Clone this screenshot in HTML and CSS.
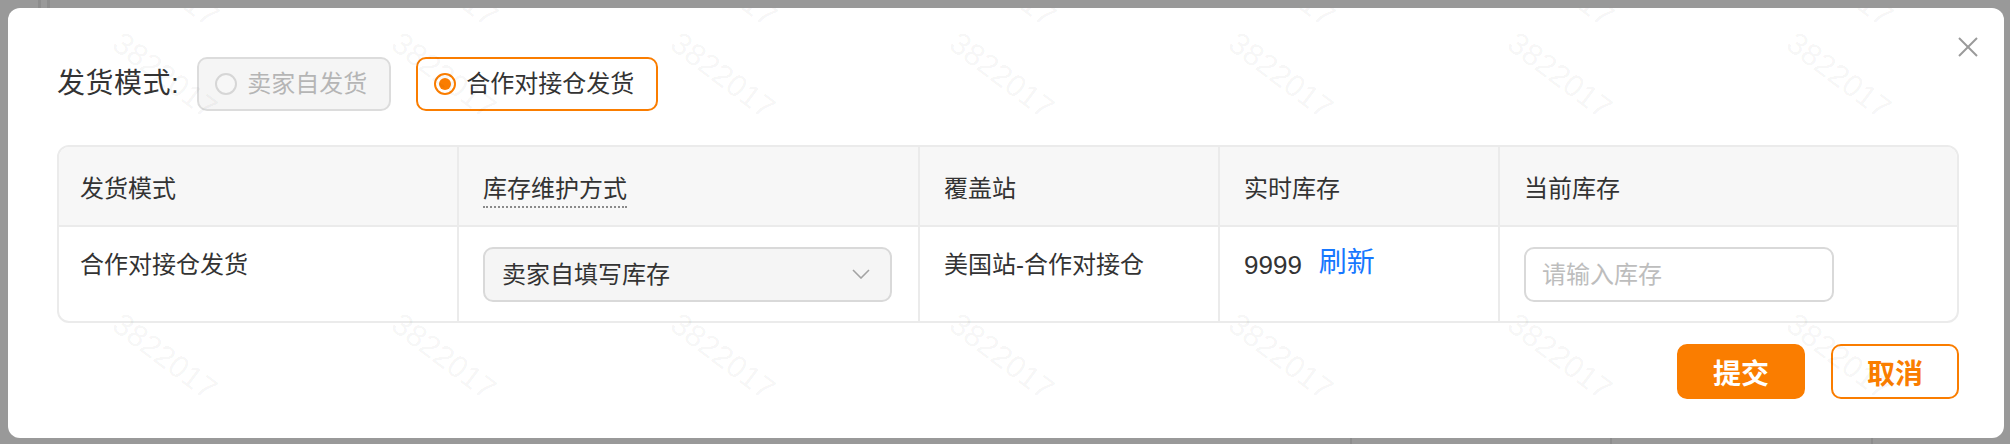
FILE: index.html
```html
<!DOCTYPE html>
<html lang="zh-CN">
<head>
<meta charset="utf-8">
<title>发货模式</title>
<link rel="stylesheet" href="styles.css">
</head>
<body>
<div class="modal">
  <div class="mode-row">
    <span class="mode-label">发货模式:</span>
    <div class="radio disabled"><span class="circle"></span><span>卖家自发货</span></div>
    <div class="radio checked"><span class="circle"></span><span>合作对接仓发货</span></div>
  </div>

  <div class="table">
    <div class="th first">发货模式</div>
    <div class="th"><span class="dotted">库存维护方式</span></div>
    <div class="th">覆盖站</div>
    <div class="th">实时库存</div>
    <div class="th">当前库存</div>

    <div class="td first">合作对接仓发货</div>
    <div class="td">
      <div class="select">
        <span>卖家自填写库存</span>
        <svg class="chev" width="18" height="10" viewBox="0 0 18 10"><polyline points="1,1 9,9 17,1" fill="none" stroke="#a3a3a3" stroke-width="1.6"/></svg>
      </div>
    </div>
    <div class="td">美国站-合作对接仓</div>
    <div class="td"><span class="num">9999</span><span class="link">刷新</span></div>
    <div class="td"><input class="input" type="text" placeholder="请输入库存"></div>
  </div>

  <div class="footer">
    <button class="btn primary">提交</button>
    <button class="btn ghost">取消</button>
  </div>

  <svg class="close" width="20" height="20" viewBox="0 0 20 20"><line x1="1" y1="1" x2="19" y2="19" stroke="#9a9a9a" stroke-width="2"/><line x1="19" y1="1" x2="1" y2="19" stroke="#9a9a9a" stroke-width="2"/></svg>

  <div class="wm-layer">
    <div class="wm-cell"><span class="wm up">3822017</span><span class="wm">3822017</span></div>
    <div class="wm-cell"><span class="wm up">3822017</span><span class="wm">3822017</span></div>
    <div class="wm-cell"><span class="wm up">3822017</span><span class="wm">3822017</span></div>
    <div class="wm-cell"><span class="wm up">3822017</span><span class="wm">3822017</span></div>
    <div class="wm-cell"><span class="wm up">3822017</span><span class="wm">3822017</span></div>
    <div class="wm-cell"><span class="wm up">3822017</span><span class="wm">3822017</span></div>
    <div class="wm-cell"><span class="wm up">3822017</span><span class="wm">3822017</span></div>
    <div class="wm-cell"><span class="wm up">3822017</span><span class="wm">3822017</span></div>
    <div class="wm-cell"><span class="wm up">3822017</span><span class="wm">3822017</span></div>
    <div class="wm-cell"><span class="wm up">3822017</span><span class="wm">3822017</span></div>
    <div class="wm-cell"><span class="wm up">3822017</span><span class="wm">3822017</span></div>
    <div class="wm-cell"><span class="wm up">3822017</span><span class="wm">3822017</span></div>
    <div class="wm-cell"><span class="wm up">3822017</span><span class="wm">3822017</span></div>
    <div class="wm-cell"><span class="wm up">3822017</span><span class="wm">3822017</span></div>
  </div>
</div>
</body>
</html>
```

FILE: styles.css
```css
html, body {
  margin: 0;
  padding: 0;
}
body {
  width: 2010px;
  height: 444px;
  overflow: hidden;
  font-family: "Liberation Sans", "Noto Sans CJK SC", sans-serif;
  color: #333;
  background:
    linear-gradient(#8d8d8d, #8d8d8d) 38px 0 / 3px 8px no-repeat,
    linear-gradient(#8d8d8d, #8d8d8d) 47px 0 / 3px 8px no-repeat,
    linear-gradient(#8d8d8d, #8d8d8d) 1350px 436px / 2px 8px no-repeat,
    linear-gradient(#8d8d8d, #8d8d8d) 1610px 436px / 2px 8px no-repeat,
    linear-gradient(#8d8d8d, #8d8d8d) 1871px 436px / 2px 8px no-repeat,
    #999999;
}
.modal {
  position: relative;
  box-sizing: border-box;
  margin: 8px 6px 0 8px;
  height: 430px;
  padding: 49px 45px 0 49px;
  background: #fff;
  border-radius: 12px;
  overflow: hidden;
}

/* mode row */
.mode-row {
  display: flex;
  align-items: center;
  height: 54px;
}
.mode-label {
  font-size: 28px;
  line-height: 36px;
  margin-right: 18px;
  letter-spacing: 0.5px;
  color: #333;
}
.radio {
  box-sizing: border-box;
  height: 54px;
  display: flex;
  align-items: center;
  gap: 10px;
  padding: 0 22px 0 16px;
  border: 2px solid #dcdcdc;
  border-radius: 10px;
  font-size: 24px;
  line-height: 36px;
}
.radio.disabled {
  background: #f5f5f5;
  color: #b5b5b5;
}
.radio.checked {
  margin-left: 25px;
  border-color: #fa7d00;
  background: #fff;
  color: #333;
}
.circle {
  box-sizing: border-box;
  width: 22px;
  height: 22px;
  border-radius: 50%;
  border: 2px solid #d6d6d6;
  background: #f7f7f7;
  display: flex;
  align-items: center;
  justify-content: center;
}
.radio.checked .circle {
  border-color: #fa7d00;
  background: #fff;
}
.radio.checked .circle::after {
  content: "";
  width: 12px;
  height: 12px;
  border-radius: 50%;
  background: #fa7d00;
}

/* table */
.table {
  margin-top: 34px;
  border: 2px solid #ebebeb;
  border-radius: 12px;
  overflow: hidden;
  display: grid;
  grid-template-columns: 398px 461px 300px 280px 1fr;
  font-size: 24px;
  line-height: 36px;
}
.th, .td {
  box-sizing: border-box;
  border-left: 2px solid #ebebeb;
  padding-left: 24px;
}
.th.first, .td.first {
  border-left: none;
  padding-left: 21px;
}
.th {
  height: 80px;
  background: #f7f7f7;
  border-bottom: 2px solid #ebebeb;
  display: flex;
  align-items: center;
  padding-top: 6px;
  color: #333;
}
.td {
  padding-top: 20px;
  padding-bottom: 19px;
  display: flex;
  align-items: flex-start;
}
.dotted {
  border-bottom: 2px dotted #8a8a8a;
  line-height: 30px;
  padding-bottom: 2px;
  margin-top: 4px;
}
.select {
  box-sizing: border-box;
  width: 409px;
  height: 55px;
  border: 2px solid #d9d9d9;
  border-radius: 10px;
  background: #f5f5f5;
  display: flex;
  align-items: center;
  justify-content: space-between;
  padding: 0 20px 0 17px;
  color: #333;
}
.chev {
  display: block;
  margin-top: -2px;
}
.num {
  font-size: 26px;
}
.link {
  font-size: 28px;
  color: #1677ff;
  margin-left: 17px;
  margin-top: -2px;
}
.input {
  box-sizing: border-box;
  width: 310px;
  height: 55px;
  border: 2px solid #d9d9d9;
  border-radius: 10px;
  background: #fff;
  padding: 0 0 0 16px;
  margin: 0;
  font-family: "Liberation Sans", "Noto Sans CJK SC", sans-serif;
  font-size: 24px;
  color: #333;
  outline: none;
}
.input::placeholder {
  color: #bdbdbd;
}

/* footer */
.footer {
  margin-top: 21px;
  display: flex;
  justify-content: flex-end;
  gap: 26px;
}
.btn {
  box-sizing: border-box;
  width: 128px;
  height: 55px;
  border-radius: 10px;
  font-family: "Liberation Sans", "Noto Sans CJK SC", sans-serif;
  font-size: 28px;
  font-weight: 700;
  padding: 0;
  cursor: pointer;
}
.btn.primary {
  background: #fa7d00;
  border: 2px solid #fa7d00;
  color: #fff;
}
.btn.ghost {
  background: #fff;
  border: 2px solid #fa7d00;
  color: #fa7d00;
}

.close {
  position: absolute;
  top: 29px;
  right: 26px;
}

/* watermark overlay */
.wm-layer {
  position: absolute;
  left: 96px;
  top: 52px;
  display: grid;
  grid-template-columns: repeat(7, 279px);
  grid-auto-rows: 281px;
  pointer-events: none;
}
.wm-cell {
  position: relative;
}
.wm {
  position: absolute;
  left: 0;
  top: 0;
  width: 122px;
  height: 31px;
  line-height: 31px;
  text-align: center;
  font-family: "Liberation Sans", sans-serif;
  font-size: 31px;
  color: rgba(0, 0, 0, 0.05);
  transform: rotate(37deg);
  white-space: nowrap;
}
.wm.up {
  left: 2px;
  top: -92px;
}
.wm-cell:nth-child(n+8) .wm.up {
  color: rgba(0, 0, 0, 0.018);
}
```
